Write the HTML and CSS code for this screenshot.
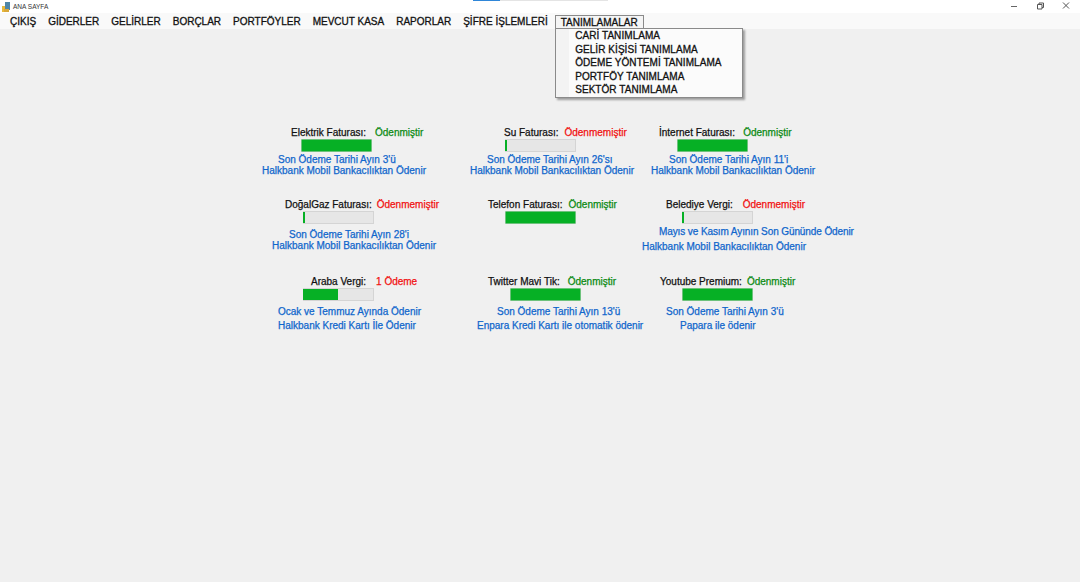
FILE: index.html
```html
<!DOCTYPE html>
<html lang="tr">
<head>
<meta charset="utf-8">
<title>ANA SAYFA</title>
<link rel="stylesheet" href="styles.css">
</head>
<body>
<div class="window">
  <header class="titlebar">
    <svg class="app-icon" width="9" height="10" viewBox="0 0 9 10"><rect x="0" y="4" width="4" height="6" fill="#e8b93c"/><rect x="3" y="0" width="5" height="8" fill="#4f86a8"/><rect x="2" y="7" width="5" height="3" fill="#d9a83a"/></svg>
    <span class="title-text">ANA SAYFA</span>
    <div class="progress-strip"><span class="progress-strip-fill"></span></div>
    <div class="controls">
      <svg width="10" height="10" viewBox="0 0 10 10"><path d="M2 5.5H8" stroke="#666" fill="none"/></svg>
      <svg width="10" height="10" viewBox="0 0 10 10"><path d="M2.5 3.5h4.5v4.5h-4.5zM4 3.5V2h4.5v4.5H7" stroke="#555" fill="none"/></svg>
      <svg width="10" height="10" viewBox="0 0 10 10"><path d="M2 1.5L8 7.5M8 1.5L2 7.5" stroke="#555" fill="none"/></svg>
    </div>
  </header>
  <nav class="menubar">
    <span class="menu-item">ÇIKIŞ</span>
    <span class="menu-item">GİDERLER</span>
    <span class="menu-item">GELİRLER</span>
    <span class="menu-item">BORÇLAR</span>
    <span class="menu-item">PORTFÖYLER</span>
    <span class="menu-item">MEVCUT KASA</span>
    <span class="menu-item">RAPORLAR</span>
    <span class="menu-item">ŞİFRE İŞLEMLERİ</span>
    <span class="menu-item open">TANIMLAMALAR
      <div class="dropdown">
        <div class="drop-item">CARİ TANIMLAMA</div>
        <div class="drop-item">GELİR KİŞİSİ TANIMLAMA</div>
        <div class="drop-item">ÖDEME YÖNTEMİ TANIMLAMA</div>
        <div class="drop-item">PORTFÖY TANIMLAMA</div>
        <div class="drop-item">SEKTÖR TANIMLAMA</div>
      </div>
    </span>
  </nav>
  <main class="board">
    <section class="card">
      <div class="line head i29"><span>Elektrik Faturası:</span><span class="paid">Ödenmiştir</span></div>
      <div class="bar i39"><span class="fill full"></span></div>
      <div class="info i16">Son Ödeme Tarihi Ayın 3'ü</div>
      <div class="info">Halkbank Mobil Bankacılıktan Ödenir</div>
    </section>
    <section class="card">
      <div class="line head i34"><span>Su Faturası:</span><span class="unpaid pull-3">Ödenmemiştir</span></div>
      <div class="bar i35"><span class="fill low"></span></div>
      <div class="info i17">Son Ödeme Tarihi Ayın 26'sı</div>
      <div class="info">Halkbank Mobil Bankacılıktan Ödenir</div>
    </section>
    <section class="card">
      <div class="line head i17"><span>İnternet Faturası:</span><span class="paid pull-1">Ödenmiştir</span></div>
      <div class="bar i35"><span class="fill full"></span></div>
      <div class="info i27">Son Ödeme Tarihi Ayın 11'i</div>
      <div class="info i9">Halkbank Mobil Bankacılıktan Ödenir</div>
    </section>
    <section class="card">
      <div class="line head i23"><span>DoğalGaz Faturası:</span><span class="unpaid pull-4">Ödenmemiştir</span></div>
      <div class="bar i41"><span class="fill low"></span></div>
      <div class="info gap i27">Son Ödeme Tarihi Ayın 28'i</div>
      <div class="info i10">Halkbank Mobil Bankacılıktan Ödenir</div>
    </section>
    <section class="card">
      <div class="line head i18"><span>Telefon Faturası:</span><span class="paid pull-3">Ödenmiştir</span></div>
      <div class="bar i35"><span class="fill full"></span></div>
    </section>
    <section class="card">
      <div class="line head i24"><span>Belediye Vergi:</span><span class="unpaid push-1">Ödenmemiştir</span></div>
      <div class="bar i40"><span class="fill low"></span></div>
      <div class="info i17 fit">Mayıs ve Kasım Ayının Son Gününde Ödenir</div>
      <div class="info gap3">Halkbank Mobil Bankacılıktan Ödenir</div>
    </section>
    <section class="card">
      <div class="line head i49"><span>Araba Vergi:</span><span class="unpaid push-1">1 Ödeme</span></div>
      <div class="bar i41"><span class="fill half"></span></div>
      <div class="info gap i16">Ocak ve Temmuz Ayında Ödenir</div>
      <div class="info gap2 i16">Halkbank Kredi Kartı İle Ödenir</div>
    </section>
    <section class="card">
      <div class="line head i18"><span>Twitter Mavi Tik:</span><span class="paid pull-1">Ödenmiştir</span></div>
      <div class="bar i40"><span class="fill full"></span></div>
      <div class="info gap i27">Son Ödeme Tarihi Ayın 13'ü</div>
      <div class="info gap2 i7">Enpara Kredi Kartı ile otomatik ödenir</div>
    </section>
    <section class="card">
      <div class="line head i18"><span>Youtube Premium:</span><span class="paid pull-4">Ödenmiştir</span></div>
      <div class="bar i40"><span class="fill full"></span></div>
      <div class="info gap i24">Son Ödeme Tarihi Ayın 3'ü</div>
      <div class="info gap2 i38">Papara ile ödenir</div>
    </section>
  </main>
</div>
</body>
</html>
```
FILE: styles.css
```css
* { box-sizing: border-box; }
html, body { margin: 0; padding: 0; height: 100%; }
body {
  background: #f0f0f0;
  font-family: "Liberation Sans", Arial, sans-serif;
  overflow: hidden;
}
.window { width: 1080px; height: 582px; display: flex; flex-direction: column; }

.titlebar {
  height: 13px;
  background: #fff;
  display: flex;
  align-items: center;
  padding-left: 2px;
  position: relative;
}
.app-icon { margin-right: 2px; }
.title-text { font-size: 6.5px; color: #333; }
.progress-strip {
  position: absolute;
  left: 473px;
  top: 0;
  width: 135px;
  height: 1px;
  background: #e4e4e4;
}
.progress-strip-fill { display: block; width: 27px; height: 1px; background: #2f86d8; }
.controls {
  position: absolute;
  right: 9px;
  top: 1px;
  display: flex;
  gap: 16px;
}

.menubar {
  height: 16px;
  background: #f9f9f9;
  display: flex;
  align-items: center;
  padding-left: 5px;
  font-size: 10px;
  color: #111;
  -webkit-text-stroke: 0.3px #111;
}
.menu-item {
  padding: 0 5px;
  margin-right: 2px;
  white-space: nowrap;
  position: relative;
  height: 14px;
  margin-top: 2px;
  line-height: 13px;
}
.menu-item.open {
  border: 1px solid #8a8a8a;
  border-bottom: 0;
  background: #f5f5f5;
  z-index: 2;
}
.dropdown {
  position: absolute;
  left: -1px;
  top: 12px;
  width: 188px;
  height: 70px;
  background: linear-gradient(to right, #f3f3f3 13px, #fbfbfb 13px);
  border: 1px solid #8a8a8a;
  box-shadow: 2px 2px 2px rgba(0, 0, 0, .35);
  padding: 0 0 0 19.5px;
}
.drop-item { height: 13.5px; line-height: 13px; letter-spacing: .06px; }

.board {
  padding: 98px 0 0 262px;
  display: grid;
  grid-template-columns: 208px 172px 240px;
  grid-template-rows: 72px 77px 70px;
  font-size: 10px;
  -webkit-text-stroke: 0.25px currentColor;
}
.card { display: flex; flex-direction: column; white-space: nowrap; }
.head { display: flex; gap: 9px; color: #111; height: 12px; line-height: 12px; }
.paid { color: #0a8a12; }
.unpaid { color: #f01010; }
.pull-1 { margin-left: -1px; }
.pull-3 { margin-left: -3px; }
.pull-4 { margin-left: -4px; }
.push-1 { margin-left: 1px; }
.bar {
  width: 71px;
  height: 13px;
  background: #e6e6e6;
  border: 1px solid #d4d4d4;
}
.fill { display: block; height: 100%; background: #06b025; }
.full { width: 100%; box-shadow: 0 0 0 .5px #06b025; }
.low { width: 2px; margin-left: -1px; }
.half { width: 35px; margin-left: -1px; }
.info { color: #0f66cc; height: 11.5px; line-height: 12px; margin-top: 1.5px; }
.info + .info { margin-top: 0; }
.info.gap { margin-top: 4.5px; }
.info.gap2 { margin-top: 2.5px; }
.info.gap3 { margin-top: 3.5px; }
.fit { letter-spacing: -.1px; }

.i7 { margin-left: 7px; }
.i9 { margin-left: 9px; }
.i10 { margin-left: 10px; }
.i16 { margin-left: 16px; }
.i17 { margin-left: 17px; }
.i18 { margin-left: 18px; }
.i23 { margin-left: 23px; }
.i24 { margin-left: 24px; }
.i27 { margin-left: 27px; }
.i29 { margin-left: 29px; }
.i34 { margin-left: 34px; }
.i35 { margin-left: 35px; }
.i38 { margin-left: 38px; }
.i39 { margin-left: 39px; }
.i40 { margin-left: 40px; }
.i41 { margin-left: 41px; }
.i49 { margin-left: 49px; }
```
